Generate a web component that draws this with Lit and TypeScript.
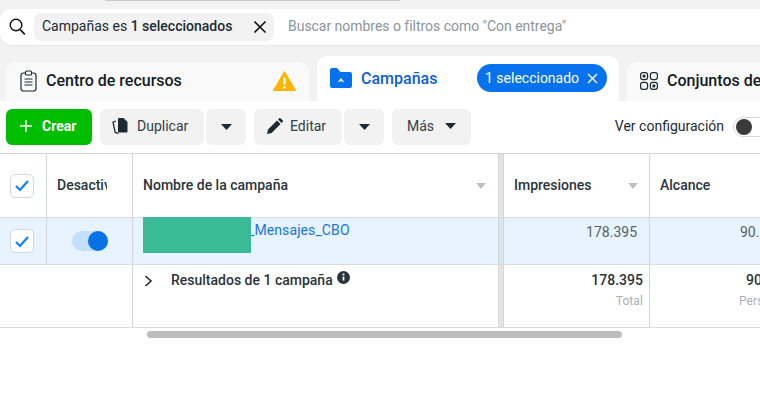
import { LitElement, html, css } from "lit";
import { customElement } from "lit/decorators.js";

const caret = html`<svg class="caret" width="11" height="6" viewBox="0 0 11 6"><path d="M0 0h11L6 5.6a.7.7 0 0 1-1 0z" fill="#1c2b33"/></svg>`;
const sort = html`<svg class="sort" width="10" height="6" viewBox="0 0 10 6"><path d="M0 0h10L5 6z" fill="#bcc0c6"/></svg>`;
const check = html`<span class="check"><svg width="16" height="13" viewBox="0 0 16 13"><path d="M2 7l4 4 8-9" fill="none" stroke="#0a84f0" stroke-width="2.2"/></svg></span>`;

@customElement("app-root")
export class AppRoot extends LitElement {
  static styles = css`
    :host { display: block; width: 760px; height: 413px; overflow: hidden; background: #fff; font-family: Roboto, "Liberation Sans", sans-serif; color: #1c2b33; position: relative; }
    svg { display: block; flex: none; }
    .head { background: #f2f2f2; height: 101px; }
    .topline { height: 1px; margin-left: 105px; width: 295px; background: #c8c8c8; }
    .search { margin-top: 8px; height: 36px; background: #fff; border-radius: 12px 0 0 12px; display: flex; align-items: center; padding-left: 9px; box-shadow: 0 1px 1px rgba(0,0,0,.04); }
    .chip { margin-left: 8px; width: 240px; height: 28px; box-sizing: border-box; background: #f2f2f2; border-radius: 7px; display: flex; align-items: center; justify-content: space-between; padding: 0 7px 0 8px; font-size: 14px; }
    .chip span { padding-bottom: 2px; }
    .chip b { font-weight: 500; }
    .ph { margin-left: 14px; font-size: 14px; color: #8d949c; letter-spacing: -.03px; padding-bottom: 2px; }
    .tabs { margin-top: 12px; height: 45px; display: flex; align-items: flex-end; padding-left: 6px; gap: 8px; }
    .tab { height: 40px; background: #f9f9f9; border-radius: 10px 10px 0 0; display: flex; align-items: center; font-size: 16px; font-weight: 500; color: #111c24; flex: none; box-sizing: border-box; }
    .t1 { width: 303px; padding: 0 13px 3px 14px; justify-content: space-between; }
    .t1 .g { display: flex; align-items: center; gap: 9px; }
    .t2 { width: 302px; height: 46px; background: #fff; padding: 0 12px 2px 13px; justify-content: space-between; color: #0a5fd8; position: relative; z-index: 1; }
    .t2 .g { display: flex; align-items: center; gap: 9px; }
    .t3 { width: 140px; padding: 0 0 3px 13px; gap: 9px; white-space: nowrap; }
    .pill { width: 130px; height: 28px; border-radius: 14px; background: #0672ee; color: #fff; font-size: 14px; font-weight: 400; display: flex; align-items: center; justify-content: space-between; box-sizing: border-box; padding: 0 9px 0 8px; }
    .bar { height: 52px; box-sizing: border-box; background: #fff; display: flex; align-items: center; padding: 0 0 0 6px; position: relative; border-radius: 8px 0 0 0; }
    .btn { height: 36px; box-sizing: border-box; background: #f2f2f2; border-radius: 6px; display: flex; align-items: center; font-size: 14px; color: #33404a; margin-right: 8px; flex: none; padding-bottom: 2px; }
    .joined { margin-right: 2px; }
    .crear { width: 86px; background: #00bd00; color: #fff; font-weight: 700; gap: 10px; padding-left: 14px; }
    .dup { width: 104px; padding-left: 12px; gap: 9px; }
    .ed { width: 88px; padding-left: 13px; gap: 7px; }
    .dd { width: 40px; justify-content: center; padding-bottom: 1px; }
    .mas { width: 79px; gap: 11px; margin-right: 0; padding-left: 15px; }
    .cfg { margin-left: auto; display: flex; align-items: center; font-size: 14px; gap: 9px; }
    .cfg span:first-child { padding-bottom: 2px; }
    .sw { width: 40px; height: 20px; box-sizing: border-box; border: 1px solid #d6d6d6; border-radius: 10px; background: #fff; display: flex; align-items: center; padding-left: 2px; margin-right: -13px; }
    .sw i { width: 16px; height: 16px; border-radius: 50%; background: #3a3a3a; }
    .table { border-top: 1px solid #d2d2d2; border-bottom: 1px solid #dcdcdc; }
    .row { display: flex; border-bottom: 1px solid #d8dde2; box-sizing: border-box; }
    .row:last-child { border-bottom: 0; }
    .h { height: 64px; }
    .r { height: 47px; background: #e7f3fe; }
    .f { height: 62px; }
    .c { flex: none; box-sizing: border-box; border-right: 1px solid #d2d6da; display: flex; overflow: hidden; font-size: 14px; }
    .c1 { width: 47px; align-items: center; justify-content: center; padding-right: 2px; }
    .f .c1 { border-right: 0; }
    .c2 { width: 86px; align-items: center; justify-content: center; }
    .c3 { width: 366px; padding-left: 10px; align-items: center; justify-content: space-between; padding-right: 12px; }
    .div { width: 5px; background: #e4e4e4; border-right: 1px solid #d2d6da; }
    .r .div { background: #dbe5ee; }
    .c4 { width: 146px; padding: 0 11px 0 10px; align-items: center; justify-content: space-between; }
    .c5 { width: 120px; padding-left: 10px; border-right: 0; align-items: center; }
    .h .c { font-weight: 500; color: #2a343c; padding-bottom: 2px; }
    .h .c1 { padding-bottom: 0; }
    .sort { margin-top: 2px; }
    .des { width: 50px; overflow: hidden; white-space: nowrap; margin-right: 15px; }
    .check { width: 24px; height: 24px; box-sizing: border-box; border: 1px solid #d4d8dc; border-radius: 5px; background: #fff; display: flex; align-items: center; justify-content: center; }
    .tog { width: 36px; height: 20px; border-radius: 10px; background: #c3dffc; position: relative; }
    .tog i { position: absolute; right: 0; top: 0; width: 20px; height: 20px; border-radius: 50%; background: #0672e6; }
    .name { align-items: flex-start; justify-content: flex-start; padding-right: 0; overflow: visible; }
    .blk { width: 108px; height: 36px; margin-top: -1px; background: #3bba97; flex: none; position: relative; z-index: 1; }
    .link { color: #1577e2; font-size: 14px; padding-top: 4px; letter-spacing: .1px; margin-left: -3px; }
    .num { justify-content: flex-end; color: #56616a; padding: 6px 0 0 0; align-items: flex-start; }
    .num.c4 { padding-right: 12px; }
    .r .c5 { padding-left: 90px; justify-content: flex-start; }
    .res { align-items: flex-start; justify-content: flex-start; padding: 7px 0 0 11px; font-weight: 500; color: #2b343b; }
    .res .chev { margin: 3px 18px 0 0; }
    .res .info { margin: -1px 0 0 4px; }
    .tot { flex-direction: column; align-items: flex-end; justify-content: flex-start; padding: 7px 6px 0 0; font-weight: 500; color: #2a343c; }
    .tot small { font-size: 12px; font-weight: 400; color: #a9afb5; margin-top: 6px; letter-spacing: .1px; }
    .tot.l { align-items: flex-start; padding-left: 0; }
    .left { padding-left: 96px; }
    .pers { padding-left: 89px; }
    .scroll { margin: 3px 0 0 147px; width: 475px; height: 7px; border-radius: 4px; background: #bdbdbd; }
  `;

  render() {
    return html`
      <div class="head">
        <div class="topline"></div>
        <div class="search">
          <svg width="17" height="18" viewBox="0 0 17 18"><circle cx="7" cy="7" r="5.8" fill="none" stroke="#111" stroke-width="1.4"/><path d="M11.2 11.6l4.6 4.8" stroke="#111" stroke-width="1.6"/></svg>
          <div class="chip"><span>Campañas es <b>1 seleccionados</b></span>
            <svg width="14" height="14" viewBox="0 0 14 14"><path d="M1.5 1.5l11 11M12.5 1.5l-11 11" stroke="#111" stroke-width="1.6"/></svg></div>
          <span class="ph">Buscar nombres o filtros como "Con entrega"</span>
        </div>
        <div class="tabs">
          <div class="tab t1">
            <span class="g">
              <svg width="17" height="22" viewBox="0 0 17 22"><rect x="1" y="3" width="15" height="18" rx="2.5" fill="none" stroke="#1c2b33" stroke-width="1.2"/><rect x="5.5" y="1" width="6" height="4" rx="1" fill="#f9f9f9" stroke="#1c2b33" stroke-width="1.1"/><path d="M4.5 9h8M4.5 12h8M4.5 15h8" stroke="#1c2b33" stroke-width="1.1"/></svg>
              Centro de recursos</span>
            <svg width="23" height="20" viewBox="0 0 23 20"><path d="M11.5 1 22.5 19.5H.5z" fill="#fbb400" stroke="#fbb400" stroke-width="1.2" stroke-linejoin="round"/><path d="M11.5 6.5v7" stroke="#fff" stroke-width="2.2"/><circle cx="11.5" cy="16.2" r="1.3" fill="#fff"/></svg>
          </div>
          <div class="tab t2">
            <span class="g">
              <svg width="22" height="20" viewBox="0 0 22 20"><path d="M0 2a2 2 0 0 1 2-2h5l3.5 4H20a2 2 0 0 1 2 2v12a2 2 0 0 1-2 2H2a2 2 0 0 1-2-2z" fill="#0672ee"/><path d="M7.5 14.5l3.5-4.5 3.5 4.5-3.5-1.5z" fill="#fff"/></svg>
              Campañas</span>
            <span class="pill">1 seleccionado <svg width="11" height="11" viewBox="0 0 11 11"><path d="M1 1l9 9M10 1l-9 9" stroke="#fff" stroke-width="1.4"/></svg></span>
          </div>
          <div class="tab t3">
            <svg width="18" height="18" viewBox="0 0 18 18" fill="none" stroke="#1c2b33" stroke-width="1.2"><rect x=".6" y=".6" width="7" height="7" rx="2.4"/><rect x="10.4" y=".6" width="7" height="7" rx="2.4"/><rect x=".6" y="10.4" width="7" height="7" rx="2.4"/><rect x="10.4" y="10.4" width="7" height="7" rx="2.4"/><circle cx="4.1" cy="4.1" r="1" fill="#1c2b33"/><circle cx="13.9" cy="13.9" r="1" fill="#1c2b33"/></svg>
            Conjuntos de anuncios
          </div>
        </div>
      </div>
      <div class="bar">
        <div class="btn crear"><svg width="12" height="12" viewBox="0 0 12 12"><path d="M6 0v12M0 6h12" stroke="#fff" stroke-width="1.5"/></svg>Crear</div>
        <div class="btn dup joined"><svg width="16" height="16" viewBox="0 0 16 16"><path d="M7 0h4.5L15.5 4v9.5a1 1 0 0 1-1 1H7a1 1 0 0 1-1-1V1a1 1 0 0 1 1-1z" fill="#1c2b33"/><path d="M4 3 1 4.2l2.2 10.3 3.3.9" fill="none" stroke="#1c2b33" stroke-width="1.3"/></svg>Duplicar</div>
        <div class="btn dd">${caret}</div>
        <div class="btn ed joined"><svg width="16" height="16" viewBox="0 0 16 16"><path d="M0 16l1-4.6L10 2.4l3.6 3.6-9 9zM11 1.4l1-1a1.2 1.2 0 0 1 1.7 0l1.9 1.9a1.2 1.2 0 0 1 0 1.7l-1 1z" fill="#1c2b33"/></svg>Editar</div>
        <div class="btn dd">${caret}</div>
        <div class="btn mas">Más ${caret}</div>
        <div class="cfg"><span>Ver configuración</span><span class="sw"><i></i></span></div>
      </div>
      <div class="table">
        <div class="row h">
          <div class="c c1">${check}</div>
          <div class="c c2"><span class="des">Desactivación</span></div>
          <div class="c c3"><span>Nombre de la campaña</span>${sort}</div>
          <div class="c div"></div>
          <div class="c c4"><span>Impresiones</span>${sort}</div>
          <div class="c c5">Alcance</div>
        </div>
        <div class="row r">
          <div class="c c1">${check}</div>
          <div class="c c2"><span class="tog"><i></i></span></div>
          <div class="c c3 name"><span class="blk"></span><span class="link">_Mensajes_CBO</span></div>
          <div class="c div"></div>
          <div class="c c4 num">178.395</div>
          <div class="c c5 num">90.123</div>
        </div>
        <div class="row f">
          <div class="c c1"></div>
          <div class="c c2"></div>
          <div class="c c3 res">
            <svg class="chev" width="9" height="12" viewBox="0 0 9 12"><path d="M1.5 1l5.5 5-5.5 5" fill="none" stroke="#1c2b33" stroke-width="1.6"/></svg>
            <span>Resultados de 1 campaña</span>
            <svg class="info" width="13" height="13" viewBox="0 0 12 12"><circle cx="6" cy="6" r="6" fill="#2b343b"/><path d="M6 5.2v3.6" stroke="#fff" stroke-width="1.6"/><circle cx="6" cy="3.2" r="1" fill="#fff"/></svg>
          </div>
          <div class="c div"></div>
          <div class="c c4 tot">178.395<small>Total</small></div>
          <div class="c c5 tot l"><span class="left">90.123</span><small class="pers">Personas</small></div>
        </div>
      </div>
      <div class="scroll"></div>
    `;
  }
}
